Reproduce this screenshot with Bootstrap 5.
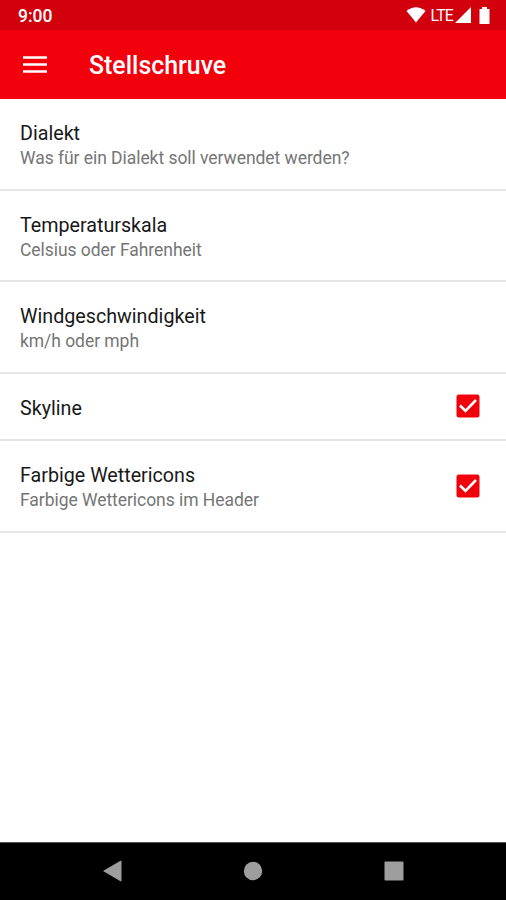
<!DOCTYPE html>
<html lang="de">
<head>
<meta charset="utf-8">
<meta name="viewport" content="width=device-width, initial-scale=1">
<title>Stellschruve</title>
<link href="https://cdn.jsdelivr.net/npm/bootstrap@5.3.0/dist/css/bootstrap.min.css" rel="stylesheet">
<style>
body { font-family: Roboto, "Liberation Sans", sans-serif; height: 900px; overflow: hidden; }
svg { display: block; flex: none; }
.status-bar { height: 30px; background: #d2000c; padding: 2px 16px 0 18px; font-size: 17.5px; font-weight: 500; }
.status-bar svg { margin-bottom: 2px; }
.status-bar .network { font-size: 15.800px; font-weight: 400; letter-spacing: -.8px; margin: 0 2px 0 5px; }
.app-bar { height: 69px; background: #f2000c; padding: 0 22px; }
.menu-button { width: 26px; height: 24px; margin-right: 41px; }
.app-title { font-size: 24.900px; font-weight: 500; line-height: 30px; padding-top: 2px; }
.list-group-flush > .setting, .list-group-flush > .setting:last-child { height: 91.5px; padding: 0 26.5px 0 20px; border: 0; border-bottom: 2px solid #e6e6e6; color: #181818; background: #fff; }
.list-group-flush > .setting.single { height: 67.5px; }
.setting-title { font-size: 19.700px; line-height: 25px; padding-top: 4px; }
.setting-note { font-size: 17.5px; line-height: 24px; letter-spacing: -.05px; color: #757575; }
.system-nav { height: 58px; background: #000; border-top: 1px solid #555; padding: 0 102px 2px; }
</style>
<script src="https://cdn.jsdelivr.net/npm/bootstrap@5.3.0/dist/js/bootstrap.bundle.min.js"></script>
</head>
<body class="d-flex flex-column bg-white">
<header class="text-white">
  <div class="status-bar d-flex align-items-center">
    <span class="me-auto">9:00</span>
    <svg width="20" height="16" viewBox="0 0 20 16"><path fill="#fff" d="M.5 4Q10-3.500 19.500 4L10 15.500z"/></svg>
    <span class="network">LTE</span>
    <svg width="16" height="16" viewBox="0 0 16 16"><path fill="#fff" d="M0 16 16 0v16z"/></svg>
    <svg class="ms-2" width="11" height="17" viewBox="0 0 11 17"><path fill="#fff" d="M3 0h5v2h2.500v15H.5V2H3z"/></svg>
  </div>
  <nav class="app-bar d-flex align-items-center">
    <button class="menu-button btn p-0 border-0" type="button" aria-label="Menü">
      <svg width="26" height="24" viewBox="0 0 26 24"><path stroke="#fff" stroke-width="2.700" d="M1 4.500h24M1 11.500h24M1 18.500h24"/></svg>
    </button>
    <h1 class="app-title mb-0">Stellschruve</h1>
  </nav>
</header>
<main class="list-group list-group-flush flex-grow-1">
  <div class="setting list-group-item d-flex align-items-center">
    <div><div class="setting-title">Dialekt</div><div class="setting-note">Was für ein Dialekt soll verwendet werden?</div></div>
  </div>
  <div class="setting list-group-item d-flex align-items-center">
    <div><div class="setting-title">Temperaturskala</div><div class="setting-note">Celsius oder Fahrenheit</div></div>
  </div>
  <div class="setting list-group-item d-flex align-items-center">
    <div><div class="setting-title">Windgeschwindigkeit</div><div class="setting-note">km/h oder mph</div></div>
  </div>
  <div class="setting single list-group-item d-flex align-items-center justify-content-between">
    <div class="setting-title">Skyline</div>
    <svg width="24" height="24" viewBox="0 0 24 24"><rect x=".5" y=".5" width="23" height="23" rx="2.500" fill="#f2000c"/><path fill="none" stroke="#fff" stroke-width="2.600" d="m4 11.500 5.500 5.500L20 6"/></svg>
  </div>
  <div class="setting list-group-item d-flex align-items-center justify-content-between">
    <div><div class="setting-title">Farbige Wettericons</div><div class="setting-note">Farbige Wettericons im Header</div></div>
    <svg width="24" height="24" viewBox="0 0 24 24"><rect x=".5" y=".5" width="23" height="23" rx="2.500" fill="#f2000c"/><path fill="none" stroke="#fff" stroke-width="2.600" d="m4 11.500 5.500 5.500L20 6"/></svg>
  </div>
</main>
<footer class="system-nav d-flex align-items-center justify-content-between">
  <svg width="20" height="22" viewBox="0 0 20 22"><path fill="#9e9e9e" d="M1 11 18.500.8q1-.5 1 .7v19q0 1.200-1 .7z"/></svg>
  <svg width="20" height="20" viewBox="0 0 20 20"><circle cx="10" cy="10" r="9.200" fill="#9e9e9e"/></svg>
  <svg width="20" height="20" viewBox="0 0 20 20"><rect x=".5" y=".5" width="19" height="19" rx="1" fill="#9e9e9e"/></svg>
</footer>
</body>
</html>
